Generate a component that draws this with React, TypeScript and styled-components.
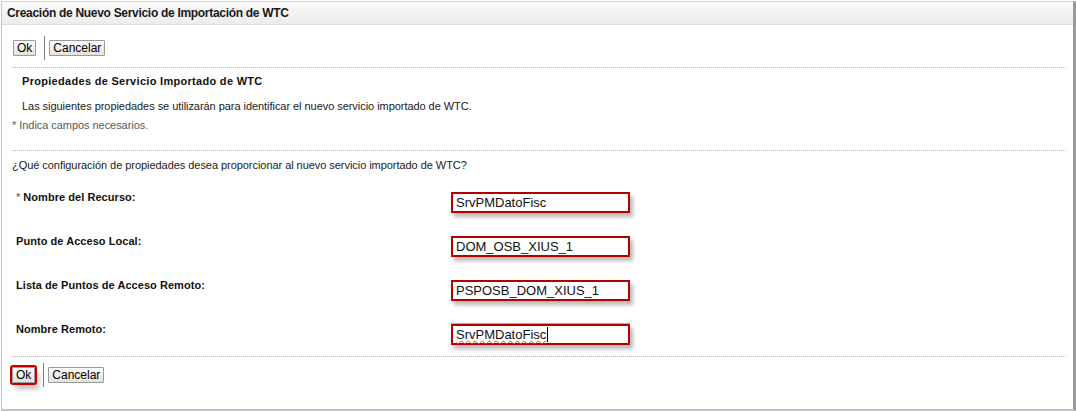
import React from "react";
import styled, { createGlobalStyle } from "styled-components";

const GlobalStyle = createGlobalStyle`
  html, body {
    margin: 0;
    padding: 0;
    background: #ffffff;
  }
  body {
    font-family: "Liberation Sans", Arial, sans-serif;
    font-size: 11px;
    color: #000;
  }
`;

const Panel = styled.div`
  box-sizing: border-box;
  margin: 1px 0 0 1px;
  width: 1075px;
  height: 410px;
  border-top: 1px solid #cfcfcf;
  border-left: 1px solid #c4c4c4;
  border-bottom: 2px solid #c0c4c8;
  border-right: 3px solid #9a9a9a;
  display: flex;
  flex-direction: column;
`;

const Header = styled.div`
  height: 22px;
  display: flex;
  align-items: center;
  padding-left: 5px;
  background: linear-gradient(#fafafa, #ececec);
  border-bottom: 1px solid #dcdcdc;
  font-size: 12px;
  font-weight: bold;
  color: #1a1a1a;
  letter-spacing: -0.3px;
`;

const Body = styled.div`
  padding: 0 7px 0 8px;
  display: flex;
  flex-direction: column;
`;

const Toolbar = styled.div<{ $top: number }>`
  display: flex;
  align-items: center;
  height: 24px;
  margin-top: ${({ $top }) => $top}px;
  padding-left: 3px;
`;

const Button = styled.button<{ $marked?: boolean }>`
  box-sizing: border-box;
  height: 16px;
  padding: 0 3px;
  font-family: "Liberation Sans", Arial, sans-serif;
  font-size: 12px;
  color: #000;
  border: 1px solid #9a9a9a;
  border-radius: 1px;
  background: linear-gradient(#fbfbfb, #e4e2dc);
  line-height: 14px;
  ${({ $marked }) =>
    $marked &&
    `
    margin-left: -1px;
    outline: 2px solid #c00000;
    outline-offset: 0px;
    box-shadow: 4px 6px 5px rgba(0, 0, 0, 0.25);
  `}
`;

const Separator = styled.span`
  width: 1px;
  height: 24px;
  background: #7a7a7a;
  margin: 0 4px 0 8px;
`;

const Divider = styled.div<{ $top: number }>`
  margin-top: ${({ $top }) => $top}px;
  margin-left: 2px;
  border-top: 1px dotted #b8b8b8;
  height: 0;
`;

const SectionTitle = styled.div`
  margin: 6px 0 0 12px;
  font-size: 11px;
  font-weight: bold;
  color: #111;
  height: 14px;
  line-height: 14px;
  letter-spacing: 0.3px;
`;

const Text = styled.div<{ $top: number; $left: number; $muted?: boolean }>`
  margin-top: ${({ $top }) => $top}px;
  margin-left: ${({ $left }) => $left}px;
  height: 14px;
  line-height: 14px;
  font-size: 11px;
  color: ${({ $muted }) => ($muted ? "#555a5e" : "#1a1a1a")};
  letter-spacing: -0.05px;
`;

const Form = styled.div`
  margin-top: 20px;
  display: flex;
  flex-direction: column;
  gap: 23px;
`;

const Row = styled.div`
  display: grid;
  grid-template-columns: 441px 179px;
  align-items: center;
  height: 21px;
`;

const Label = styled.div`
  padding-left: 6px;
  font-size: 11px;
  font-weight: bold;
  color: #111;
  letter-spacing: 0.05px;
  margin-top: -12px;
`;

const Star = styled.span`
  font-weight: normal;
  color: #555;
  margin-right: 3px;
`;

const Field = styled.div<{ $focused?: boolean }>`
  box-sizing: border-box;
  height: 21px;
  border: 2px solid #b50000;
  background: #fff;
  box-shadow: ${({ $focused }) =>
    $focused
      ? "3px 4px 4px rgba(0, 0, 0, 0.28), 0 -1px 0 #8fb0da"
      : "3px 4px 4px rgba(0, 0, 0, 0.28)"};
  display: flex;
  align-items: center;
  padding-left: 3px;
  font-family: "Liberation Sans", Arial, sans-serif;
  font-size: 13px;
  color: #111;
`;

const Spell = styled.span`
  text-decoration: underline wavy #e04040;
  text-decoration-thickness: 1px;
  text-underline-offset: 1px;
`;

const Caret = styled.span`
  display: inline-block;
  width: 1px;
  height: 15px;
  background: #000;
  margin-left: 1px;
`;

const fields = [
  { label: "Nombre del Recurso:", value: "SrvPMDatoFisc", required: true },
  { label: "Punto de Acceso Local:", value: "DOM_OSB_XIUS_1" },
  { label: "Lista de Puntos de Acceso Remoto:", value: "PSPOSB_DOM_XIUS_1" },
  { label: "Nombre Remoto:", value: "SrvPMDatoFisc", focused: true },
];

export default function App() {
  return (
    <>
      <GlobalStyle />
      <Panel>
        <Header>Creación de Nuevo Servicio de Importación de WTC</Header>
        <Body>
          <Toolbar $top={11}>
            <Button>Ok</Button>
            <Separator />
            <Button>Cancelar</Button>
          </Toolbar>
          <Divider $top={7} />
          <SectionTitle>Propiedades de Servicio Importado de WTC</SectionTitle>
          <Text $top={11} $left={12}>
            Las siguientes propiedades se utilizarán para identificar el nuevo servicio importado de WTC.
          </Text>
          <Text $top={5} $left={2} $muted>
            * Indica campos necesarios.
          </Text>
          <Divider $top={18} />
          <Text $top={7} $left={2}>
            ¿Qué configuración de propiedades desea proporcionar al nuevo servicio importado de WTC?
          </Text>
          <Form>
            {fields.map((f) => (
              <Row key={f.label}>
                <Label>
                  {f.required && <Star>*</Star>}
                  {f.label}
                </Label>
                <Field $focused={f.focused}>
                  {f.focused ? (
                    <>
                      <Spell>{f.value}</Spell>
                      <Caret />
                    </>
                  ) : (
                    f.value
                  )}
                </Field>
              </Row>
            ))}
          </Form>
          <Divider $top={11} />
          <Toolbar $top={6}>
            <Button $marked>Ok</Button>
            <Separator />
            <Button>Cancelar</Button>
          </Toolbar>
        </Body>
      </Panel>
    </>
  );
}
